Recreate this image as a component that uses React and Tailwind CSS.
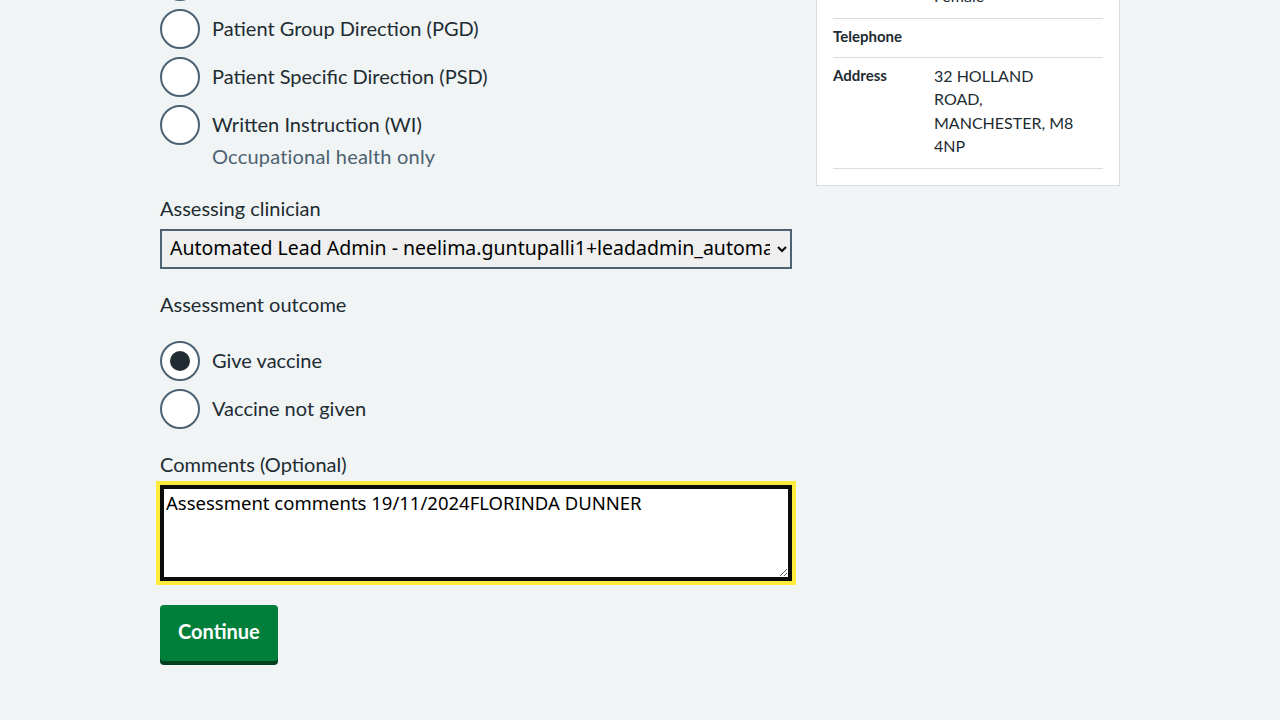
import React from "react";

const body = { fontFamily: "Lato, 'Noto Sans', sans-serif" };
const sys = { fontFamily: "'Noto Sans', 'Open Sans', sans-serif" };

function Radio({ label, checked, hint }) {
  return (
    <div className="flex items-start">
      <div className="w-10 h-10 shrink-0 rounded-full border-2 border-[#4c6272] bg-white flex items-center justify-center">
        {checked && <div className="w-5 h-5 rounded-full bg-[#212b32]" />}
      </div>
      <div className="pl-3">
        <div className="text-[20px] leading-[26px] pt-[6px] text-[#212b32]">{label}</div>
        {hint && (
          <div className="text-[20px] leading-[24px] mt-[7px] pb-px tracking-[0.2px] text-[#4c6272]">{hint}</div>
        )}
      </div>
    </div>
  );
}

function Row({ k, v, keyPad = "pt-[6px] pb-[10px]" }) {
  return (
    <div className="flex border-b border-[#d8dde0]">
      <div className={"w-[101px] shrink-0 text-[15px] leading-[22px] font-bold text-[#212b32] " + keyPad}>{k}</div>
      <div className="w-[150px] pt-[6px] pb-[10px] text-[16px] leading-[23.5px] text-[#212b32]">{v}</div>
    </div>
  );
}

export default function App() {
  return (
    <div className="min-h-screen bg-[#f0f4f5] overflow-hidden" style={body}>
      <div className="w-[960px] mx-auto flex items-start gap-6">
        <div className="w-[632px] shrink-0 -mt-[39px]">
          <div className="flex flex-col gap-2">
            <Radio label="Other" />
            <Radio label="Patient Group Direction (PGD)" />
            <Radio label="Patient Specific Direction (PSD)" />
            <Radio label="Written Instruction (WI)" hint="Occupational health only" />
          </div>
          <div className="mt-[27px] text-[20px] leading-[24px] text-[#212b32]">Assessing clinician</div>
          <select
            className="mt-[9px] w-full h-10 border-2 border-[#4c6272] bg-[#efefef] text-black text-[19.5px] pl-[4px] pr-1 pb-[3px]"
            style={sys}
            defaultValue="a"
          >
            <option value="a">Automated Lead Admin - neelima.guntupalli1+leadadmin_automation@nhs.net</option>
          </select>
          <div className="mt-[23px] text-[20px] leading-[24px] text-[#212b32]">Assessment outcome</div>
          <div className="mt-[25px] flex flex-col gap-2">
            <Radio label="Give vaccine" checked />
            <Radio label="Vaccine not given" />
          </div>
          <div className="mt-[23px] text-[20px] leading-[24px] text-[#212b32]">Comments (Optional)</div>
          <div className="mt-[9px] outline-4 outline-[#ffeb3b]">
            <textarea
              className="block w-full h-[96px] border-4 border-[#0b0c0c] bg-white text-black text-[18.5px] leading-[26px] px-[2px] py-[1px] outline-none"
              style={sys}
              defaultValue="Assessment comments 19/11/2024FLORINDA DUNNER"
            />
          </div>
          <button className="mt-6 h-[56px] px-[18px] pb-[4px] bg-[#007f3b] text-white text-[20px] font-bold rounded-[4px] shadow-[0_4px_0_#00401e]">
            Continue
          </button>
        </div>
        <div className="w-[304px] shrink-0 -mt-[39px] bg-white border border-[#d8dde0] p-4">
          <Row k="Sex" v="Female" keyPad="pt-0 pb-[16px]" />
          <Row k="Telephone" v="" />
          <Row k="Address" v="32 HOLLAND ROAD, MANCHESTER, M8 4NP" />
        </div>
      </div>
    </div>
  );
}
